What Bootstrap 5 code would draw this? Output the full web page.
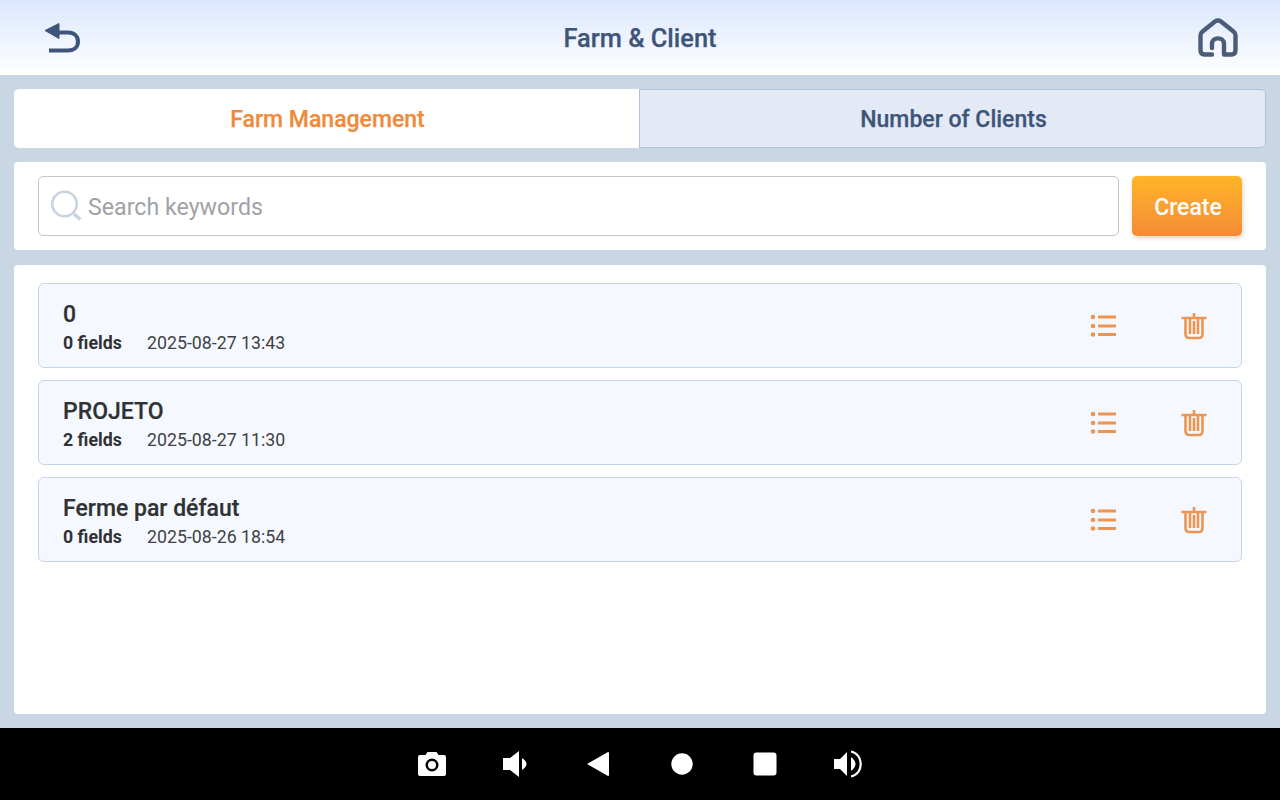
<!DOCTYPE html>
<html lang="en">
<head>
<meta charset="utf-8">
<title>Farm &amp; Client</title>
<link href="https://cdn.jsdelivr.net/npm/bootstrap@5.3.0/dist/css/bootstrap.min.css" rel="stylesheet">
<style>
html,body{height:100%;}
body{width:1280px;height:800px;overflow:hidden;background:#c9d6e4;font-family:Roboto,"Liberation Sans",sans-serif;color:#303133;}
.shell{height:800px;}
.topbar{height:75px;background:linear-gradient(180deg,#dbe7fd 0%,#ffffff 100%);padding:0 42px 0 44px;}
.topbar h1{font-size:25.4px;font-weight:500;color:#3e5579;margin:0;line-height:1;-webkit-text-stroke:.25px #3e5579;}
.topbar .ttl{left:0;right:0;top:26px;text-align:center;}
.content{padding:14px 14px 14px;gap:14px;height:653px;}
.tabbar{height:59px;border-radius:5px;}
.tabon,.taboff{font-size:23px;font-weight:500;padding:4px 0 0 2px;-webkit-text-stroke:.25px currentColor;}
.tabon{flex:0 0 625px;background:#fff;color:#ef8b3c;border-radius:5px 0 0 5px;}
.taboff{flex:1 1 auto;background:#e3eaf6;color:#3e5579;border:1px solid #b2c1d8;border-radius:0 5px 5px 0;}
.searchcard{height:88px;background:#fff;border-radius:4px;padding:14px 24px;gap:13px;}
.searchbox{flex:1;height:60px;border:1px solid #c3c7cd;border-radius:5px;padding-left:12px;gap:5px;font-size:23.2px;color:#a0a2a6;}
.searchbox span{padding-top:3px;}
.createbtn{width:110px;height:60px;border:0;border-radius:5px;background:linear-gradient(180deg,#fdb528 0%,#f68b37 100%);color:#fff;font-size:23px;font-weight:500;box-shadow:1px 2px 4px rgba(200,170,130,.5);padding:4px 0 0 2px;}
.listcard{height:449px;background:#fff;border-radius:4px;padding:18px 24px;gap:12px;margin-top:1px;}
.farmrow{height:85px;background:#f5f9ff;border:1px solid #c4d5e6;border-radius:6px;padding:0 24px;}
.farmname{font-size:23px;font-weight:500;line-height:28px;color:#303133;margin-top:3px;-webkit-text-stroke:.2px #303133;}
.farmmeta{font-size:17.75px;line-height:22px;margin-top:3px;color:#404245;}
.farmmeta b{font-weight:700;color:#303133;width:84px;display:inline-block;}
.acts{gap:63px;padding-right:10px;}
.navbarb{height:72px;background:#000;gap:0;}
.navslot{width:83.3px;display:flex;justify-content:center;align-items:center;}
</style>
</head>
<body>
<div class="shell d-flex flex-column">
  <header class="topbar position-relative d-flex align-items-center justify-content-between flex-shrink-0">
    <svg width="38" height="34" viewBox="0 0 38 34"><path d="M15 2.500 L1 9.500 L15 17.500 Z" fill="#3e5579" stroke="#3e5579" stroke-width="1" stroke-linejoin="round"/><path d="M14 11.500 H24 C30 11.500 34 15 34 20.500 C34 26 30 29.500 24 29.500 H5" fill="none" stroke="#3e5579" stroke-width="4"/></svg>
    <div class="ttl position-absolute"><h1>Farm &amp; Client</h1></div>
    <svg width="40" height="40" viewBox="0 0 40 40"><path d="M14 36.500 H6.500 Q2.500 36.500 2.500 32 V17.500 Q2.500 15 4.500 13.500 L17 3.500 Q20 1.500 23 3.500 L35.500 13.500 Q37.500 15 37.500 17.500 V32 Q37.500 36.500 33.500 36.500 H26 V26 C26 18.500 14 18.500 14 26 V30" fill="none" stroke="#4a5c7a" stroke-width="4.400" stroke-linecap="round" stroke-linejoin="round"/></svg>
  </header>
  <main class="content d-flex flex-column flex-shrink-0">
    <div class="tabbar d-flex">
      <div class="tabon d-flex align-items-center justify-content-center">Farm Management</div>
      <div class="taboff d-flex align-items-center justify-content-center">Number of Clients</div>
    </div>
    <div class="searchcard d-flex">
      <div class="searchbox d-flex align-items-center">
        <svg width="32" height="32" viewBox="0 0 32 32"><circle cx="13.500" cy="14" r="12.300" fill="none" stroke="#c7d3e2" stroke-width="2.500"/><path d="M23 24 L29.500 29.500" stroke="#c7d3e2" stroke-width="3.500"/></svg>
        <span>Search keywords</span>
      </div>
      <button class="createbtn" type="button">Create</button>
    </div>
    <div class="listcard d-flex flex-column">
      <div class="farmrow d-flex align-items-center justify-content-between">
        <div><div class="farmname">0</div><div class="farmmeta"><b>0 fields</b><span>2025-08-27 13:43</span></div></div>
        <div class="acts d-flex align-items-center">
          <svg width="28" height="26" viewBox="0 0 28 26"><g fill="#ef9450"><circle cx="3" cy="4" r="2.300"/><circle cx="3" cy="13" r="2.300"/><circle cx="3" cy="21.500" r="2.300"/></g><path d="M8 4 H26 M8 13 H26 M8 21.500 H26" stroke="#ef9450" stroke-width="3"/></svg>
          <svg width="26" height="28" viewBox="0 0 26 28"><path d="M0.500 6 H25.500 M13 1 V6 M4.500 6 V22 Q4.500 26 8.500 26 H17.500 Q21.500 26 21.500 22 V6 M9 6 V22 M13 9 V22 M17 6 V22" fill="none" stroke="#ef9450" stroke-width="2.600"/></svg>
        </div>
      </div>
      <div class="farmrow d-flex align-items-center justify-content-between">
        <div><div class="farmname">PROJETO</div><div class="farmmeta"><b>2 fields</b><span>2025-08-27 11:30</span></div></div>
        <div class="acts d-flex align-items-center">
          <svg width="28" height="26" viewBox="0 0 28 26"><g fill="#ef9450"><circle cx="3" cy="4" r="2.300"/><circle cx="3" cy="13" r="2.300"/><circle cx="3" cy="21.500" r="2.300"/></g><path d="M8 4 H26 M8 13 H26 M8 21.500 H26" stroke="#ef9450" stroke-width="3"/></svg>
          <svg width="26" height="28" viewBox="0 0 26 28"><path d="M0.500 6 H25.500 M13 1 V6 M4.500 6 V22 Q4.500 26 8.500 26 H17.500 Q21.500 26 21.500 22 V6 M9 6 V22 M13 9 V22 M17 6 V22" fill="none" stroke="#ef9450" stroke-width="2.600"/></svg>
        </div>
      </div>
      <div class="farmrow d-flex align-items-center justify-content-between">
        <div><div class="farmname">Ferme par défaut</div><div class="farmmeta"><b>0 fields</b><span>2025-08-26 18:54</span></div></div>
        <div class="acts d-flex align-items-center">
          <svg width="28" height="26" viewBox="0 0 28 26"><g fill="#ef9450"><circle cx="3" cy="4" r="2.300"/><circle cx="3" cy="13" r="2.300"/><circle cx="3" cy="21.500" r="2.300"/></g><path d="M8 4 H26 M8 13 H26 M8 21.500 H26" stroke="#ef9450" stroke-width="3"/></svg>
          <svg width="26" height="28" viewBox="0 0 26 28"><path d="M0.500 6 H25.500 M13 1 V6 M4.500 6 V22 Q4.500 26 8.500 26 H17.500 Q21.500 26 21.500 22 V6 M9 6 V22 M13 9 V22 M17 6 V22" fill="none" stroke="#ef9450" stroke-width="2.600"/></svg>
        </div>
      </div>
    </div>
  </main>
  <footer class="navbarb d-flex align-items-center justify-content-center flex-shrink-0">
    <div class="navslot"><svg width="30" height="26" viewBox="0 0 30 26"><path fill-rule="evenodd" fill="#fff" d="M3 4 H8.500 L10.500 1 H19.500 L21.500 4 H27 Q29 4 29 6 V23 Q29 25 27 25 H3 Q1 25 1 23 V6 Q1 4 3 4 Z M15 7.500 A6.500 6.500 0 1 0 15 20.500 A6.500 6.500 0 1 0 15 7.500 Z M15 10 A4 4 0 1 1 15 18 A4 4 0 1 1 15 10 Z"/></svg></div>
    <div class="navslot"><svg width="26" height="28" viewBox="0 0 26 28"><path fill="#fff" d="M1 8 H8 L17 1 V27 L8 20 H1 Z M20 8 Q29 14 20 20 Z"/></svg></div>
    <div class="navslot"><svg width="24" height="26" viewBox="0 0 24 26"><path fill="#fff" d="M22 1 Q23 1 23 2 V24 Q23 25 22 25 L1 13 Z"/></svg></div>
    <div class="navslot"><svg width="22" height="22" viewBox="0 0 22 22"><circle cx="11" cy="11" r="10.700" fill="#fff"/></svg></div>
    <div class="navslot"><svg width="24" height="24" viewBox="0 0 24 24"><rect x="0.500" y="0.500" width="23" height="23" rx="3" fill="#fff"/></svg></div>
    <div class="navslot"><svg width="30" height="28" viewBox="0 0 30 28"><path fill="#fff" d="M1 9 H7 L14 2 V26 L7 19 H1 Z M18 7 Q27 14 18 21 Z"/><path d="M18 1.500 C31 4 31 24 18 26.500" fill="none" stroke="#fff" stroke-width="2.200"/></svg></div>
  </footer>
</div>
<script src="https://cdn.jsdelivr.net/npm/bootstrap@5.3.0/dist/js/bootstrap.bundle.min.js"></script>
</body>
</html>
